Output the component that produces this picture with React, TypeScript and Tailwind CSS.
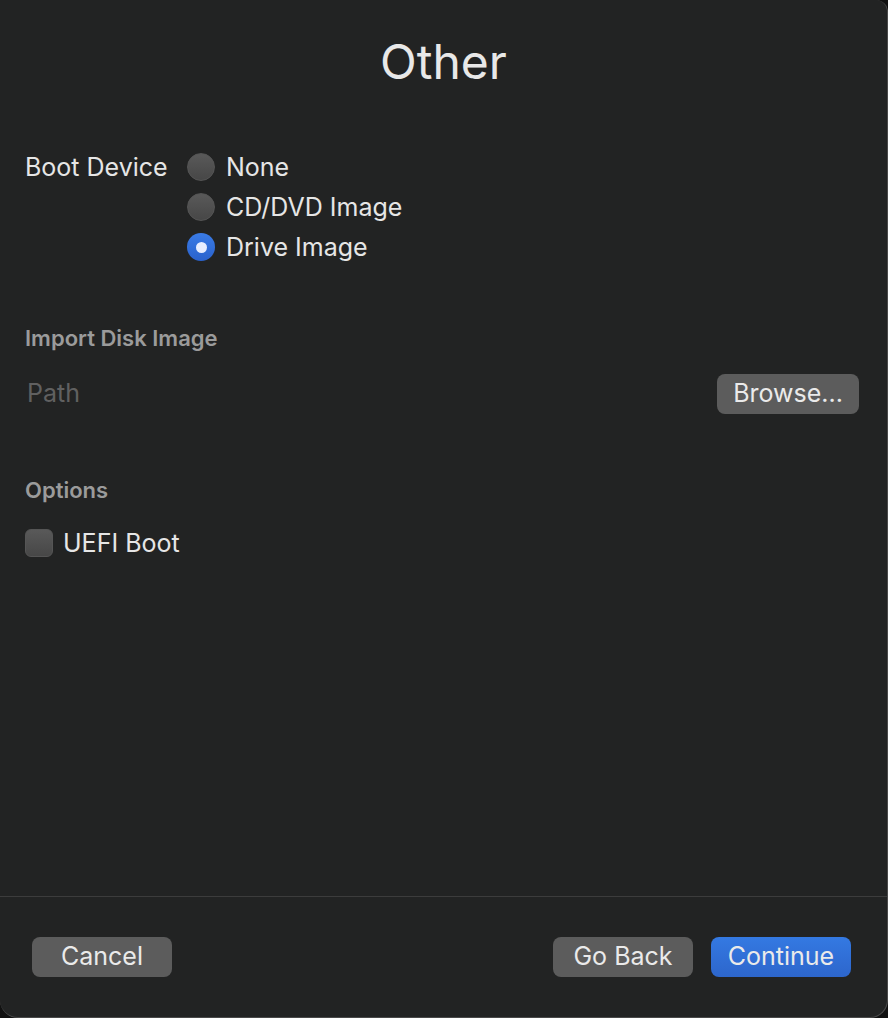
import React from 'react'

const font = { fontFamily: 'Inter, "Noto Sans", sans-serif' }

function Radio({ label, checked }: { label: string; checked?: boolean }) {
  return (
    <div className="flex h-[40px] items-center">
      {checked ? (
        <span className="flex h-[28px] w-[28px] items-center justify-center rounded-full bg-gradient-to-b from-[#3a7be6] to-[#2a62cc]">
          <span className="h-[11px] w-[11px] rounded-full bg-[#e8eeff]" />
        </span>
      ) : (
        <span className="h-[28px] w-[28px] rounded-full border border-[#555] bg-gradient-to-b from-[#595959] to-[#474747]" />
      )}
      <span className="ml-[11px] text-[25px] leading-none text-[#e6e6e6]">{label}</span>
    </div>
  )
}

function Button({ label, primary }: { label: string; primary?: boolean }) {
  return (
    <button
      className={
        'flex h-[40px] w-[140px] items-center justify-center rounded-[8px] text-[25px] text-[#eaeaea] ' +
        (primary ? 'bg-gradient-to-b from-[#3479e2] to-[#2d66cc]' : 'bg-[#5c5c5c]')
      }
    >
      {label}
    </button>
  )
}

export default function App() {
  return (
    <div className="min-h-screen bg-[#111]" style={font}>
      <div className="flex h-[1018px] w-[888px] flex-col overflow-hidden rounded-tr-[12px] rounded-b-[18px] border-r border-b border-[#4a4a4a] bg-[#222323]">
        <div className="pt-[32px] text-center text-[48px] leading-[60px] text-[#e8e8e8]">Other</div>

        <div className="px-[25px]">
          {/* Boot device */}
          <div className="mt-[55px] flex">
            <div className="flex h-[40px] w-[162px] items-center text-[25px] leading-none text-[#e6e6e6]">Boot Device</div>
            <div className="flex flex-col">
              <Radio label="None" />
              <Radio label="CD/DVD Image" />
              <Radio label="Drive Image" checked />
            </div>
          </div>

          {/* Import */}
          <div className="mt-[59px] text-[22px] font-semibold leading-[24px] text-[#9b9b9b]">Import Disk Image</div>
          <div className="mt-[24px] flex h-[40px] items-center justify-between pr-[3px]">
            <span className="pl-[2px] text-[25px] text-[#606060]">Path</span>
            <button className="flex h-[40px] w-[142px] items-center justify-center rounded-[8px] bg-[#5c5c5c] text-[25px] text-[#eaeaea]">
              Browse...
            </button>
          </div>

          {/* Options */}
          <div className="mt-[64px] text-[22px] font-semibold leading-[24px] text-[#9b9b9b]">Options</div>
          <div className="mt-[27px] flex h-[28px] items-center">
            <span className="h-[28px] w-[28px] rounded-[6px] border border-[#555] bg-gradient-to-b from-[#595959] to-[#474747]" />
            <span className="ml-[10px] text-[25px] leading-none text-[#e6e6e6]">UEFI Boot</span>
          </div>
        </div>

        <div className="flex-1" />

        <div className="h-px bg-[#3c3c3c]" />
        <div className="flex h-[120px] items-center pl-[32px] pr-[36px]">
          <Button label="Cancel" />
          <div className="flex-1" />
          <div className="flex gap-[18px]">
            <Button label="Go Back" />
            <Button label="Continue" primary />
          </div>
        </div>
      </div>
    </div>
  )
}
